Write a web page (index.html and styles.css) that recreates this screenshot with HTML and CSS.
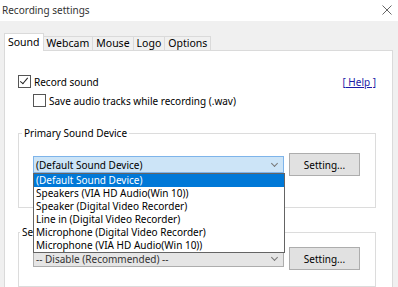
FILE: index.html
```html
<!DOCTYPE html>
<html lang="en">
<head>
  <meta charset="UTF-8" />
  <title>Recording settings</title>
  <link rel="stylesheet" href="styles.css">
</head>
<body>

  <!-- Barra de titulo -->
  <div class="titlebar">
    <span class="title">Recording settings</span>
    <svg class="close" width="10" height="10" viewBox="0 0 10 10">
      <path d="M0.5 0.5 L9.5 9.5 M9.5 0.5 L0.5 9.5" stroke="#666" stroke-width="1" fill="none" />
    </svg>
  </div>

  <!-- Pestanas -->
  <div class="tabs">
    <div class="tab active">Sound</div>
    <div class="tab">Webcam</div>
    <div class="tab">Mouse</div>
    <div class="tab">Logo</div>
    <div class="tab">Options</div>
  </div>

  <div class="panel">
    <div class="row-top">
      <label class="check"><span class="box checked"></span>Record sound</label>
      <a class="help" href="#">[ Help ]</a>
    </div>
    <label class="check sub"><span class="box"></span>Save audio tracks while recording (.wav)</label>

    <fieldset class="group">
      <legend>Primary Sound Device</legend>
      <div class="device-row">
        <div class="combo open">
          <span>(Default Sound Device)</span>
          <span class="arrow"></span>
          <ul class="dropdown">
            <li class="selected">(Default Sound Device)</li>
            <li>Speakers (VIA HD Audio(Win 10))</li>
            <li>Speaker (Digital Video Recorder)</li>
            <li>Line in (Digital Video Recorder)</li>
            <li>Microphone (Digital Video Recorder)</li>
            <li>Microphone (VIA HD Audio(Win 10))</li>
          </ul>
        </div>
        <button class="btn">Setting...</button>
      </div>
    </fieldset>

    <fieldset class="group second">
      <legend>Secondary Sound Device</legend>
      <div class="device-row">
        <div class="combo">
          <span>-- Disable (Recommended) --</span>
          <span class="arrow"></span>
        </div>
        <button class="btn">Setting...</button>
      </div>
    </fieldset>
  </div>

</body>
</html>
```

FILE: styles.css
```css
html, body {
  height: 287px;
  overflow: hidden;
}
body {
  margin: 0;
  background-color: #f0f0f0;
  font-family: 'Noto Sans', 'Open Sans', sans-serif;
  font-size: 10px;
  line-height: 14px;
  color: #000;
}

/* ---------- barra de titulo ---------- */
.titlebar {
  height: 21px;
  box-sizing: border-box;
  background: #fff;
  display: flex;
  align-items: center;
  justify-content: space-between;
  padding: 0 6px 2px 2px;
}
.title {
  color: #333;
}

/* ---------- pestanas ---------- */
.tabs {
  display: flex;
  align-items: flex-end;
  margin: 12px 0 0 4px;
  height: 17px;
  font-size: 10.5px;
}
.tab {
  height: 13px;
  line-height: 13px;
  padding: 0 3px;
  border: 1px solid #dadada;
  border-bottom: none;
  border-left: none;
  background: #f0f0f0;
}
.tab.active {
  height: 17px;
  line-height: 17px;
  background: #fff;
  border-left: 1px solid #dadada;
  margin-bottom: -1px;
  position: relative;
  z-index: 1;
  padding: 0 3px;
}

.panel {
  background: #fff;
  border: 1px solid #dadada;
  border-bottom: none;
  margin: 0 5px 0 4px;
  height: 236px;
  padding: 0 16px 0 13px;
  position: relative;
}

/* ---------- casillas ---------- */
.row-top {
  display: flex;
  justify-content: space-between;
  align-items: center;
  height: 13px;
  margin-top: 24px;
}
.check {
  display: flex;
  align-items: center;
  gap: 3px;
  height: 13px;
}
.check.sub {
  margin: 6px 0 0 15px;
}
.box {
  width: 11px;
  height: 11px;
  border: 1px solid #555;
  background: #fff;
  position: relative;
}
.box.checked::after {
  content: "";
  position: absolute;
  left: 3px;
  top: 0;
  width: 3px;
  height: 7px;
  border: solid #222;
  border-width: 0 1px 1px 0;
  transform: rotate(40deg);
}
.help {
  color: #1a1aa6;
  text-decoration: underline;
}

/* ---------- grupos ---------- */
.group {
  border: 1px solid #dcdcdc;
  margin: 19px 0 0 0;
  padding: 13px 15px 31px 14px;
  min-width: 0;
}
.group legend {
  padding: 0 2px;
  margin-left: -11px;
  line-height: 14px;
}
.group.second {
  margin-top: 17px;
  padding-top: 8px;
  padding-bottom: 16px;
}
.group.second legend {
  margin-left: -13px;
}

.device-row {
  display: flex;
  align-items: center;
  gap: 5px;
}

.combo {
  width: 241px;
  height: 15px;
  border: 1px solid #adadad;
  background: #e5e5e5;
  display: flex;
  align-items: center;
  justify-content: space-between;
  padding: 0 6px 0 2px;
  position: relative;
  color: #333;
}
.combo.open {
  background: #cce4f7;
  border-color: #7eb4ea;
  color: #000;
}
.arrow {
  width: 4px;
  height: 4px;
  border: solid #777;
  border-width: 0 1px 1px 0;
  transform: rotate(45deg);
  margin-top: -3px;
}

/* lista desplegada encima del resto */
.dropdown {
  position: absolute;
  top: 16px;
  left: -1px;
  width: 250px;
  margin: 0;
  padding: 0;
  list-style: none;
  background: #fff;
  border: 1px solid #646464;
  color: #000;
  z-index: 5;
}
.dropdown li {
  height: 13px;
  line-height: 13px;
  padding-left: 2px;
  white-space: nowrap;
}
.dropdown li.selected {
  background: #0078d7;
  color: #fff;
}

.btn {
  width: 71px;
  height: 23px;
  background: #e1e1e1;
  border: 1px solid #adadad;
  font-family: inherit;
  font-size: 10px;
  padding: 0;
  color: #000;
}
```
